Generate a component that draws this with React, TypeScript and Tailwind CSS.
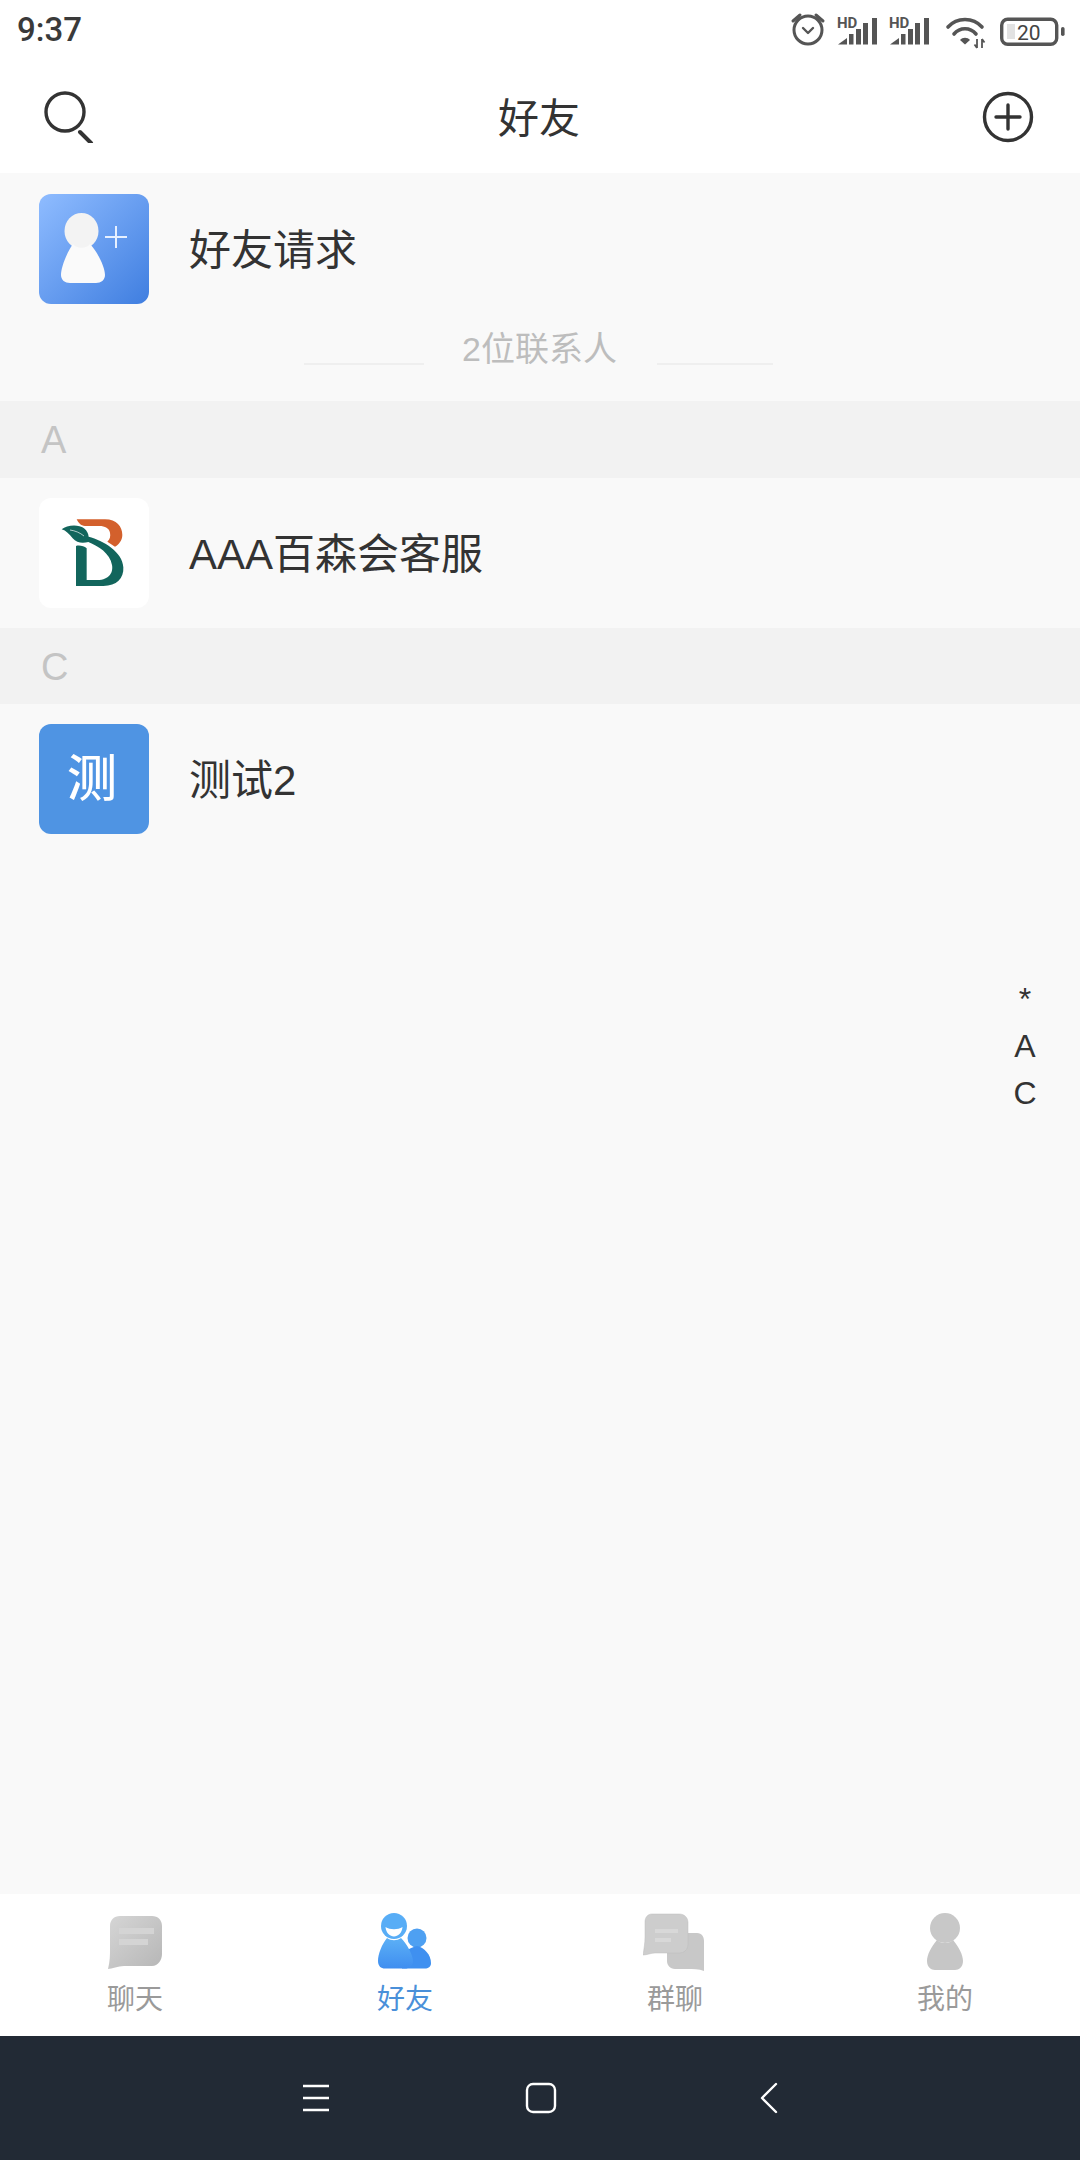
const FONT = "font-['Liberation_Sans','Noto_Sans_CJK_SC',sans-serif]";

function StatusIcons() {
  const signal = (x: number) => (
    <g fill="#555">
      <text x={x - 1} y={28} fontSize="15" fontWeight="700" fontFamily="Roboto, sans-serif" fill="#555">HD</text>
      <path d={`M${x} 44.5 L${x + 9} 38 V44.5 Z`} />
      <rect x={x + 11} y={34} width={4.5} height={10.5} />
      <rect x={x + 18} y={29} width={5} height={15.5} />
      <rect x={x + 25} y={23} width={5} height={21.5} />
      <rect x={x + 34} y={18} width={5} height={26.5} />
    </g>
  );
  return (
    <svg width="240" height="60" viewBox="830 0 240 60" className="shrink-0">
      {signal(838)}
      {signal(890)}
      <g fill="none" stroke="#555" strokeWidth="3.6" strokeLinecap="round">
        <path d="M948 27 C957 17 973 17 982 27" />
        <path d="M954 34 C960 27 970 27 976 34" />
      </g>
      <path d="M960 40 C962.5 37 967.5 37 970 40 L965 44.5 Z" fill="#555" />
      <path d="M977 39 V48 M974.5 44.5 L977 48 M982 39 V48 M982 39 L984.5 42.5" stroke="#555" strokeWidth="1.8" fill="none" />
      <rect x="1001.7" y="19.2" width="55" height="25" rx="6" fill="none" stroke="#555" strokeWidth="3.4" />
      <rect x="1007" y="24" width="8" height="15" fill="#e2e2e2" />
      <rect x="1061" y="27" width="3.6" height="9" rx="1.8" fill="#555" />
      <text x="1017" y="39.5" fontSize="21" fill="#444" fontFamily="Roboto, sans-serif">20</text>
    </svg>
  );
}

function Alarm() {
  return (
    <svg width="36" height="36" viewBox="790 14 36 36" className="shrink-0">
      <g fill="none" stroke="#555" strokeWidth="3" strokeLinecap="round" strokeLinejoin="round">
        <circle cx="808" cy="32" r="14" />
        <path d="M793 23 L800 17 M816 17 L823 23" />
        <path d="M803 30 L808 35 L813 30" strokeWidth="2.4" />
      </g>
    </svg>
  );
}

function BLogo() {
  return (
    <svg width="110" height="110" viewBox="-63 -36 330 330">
      <path
        d="M50 28 H135 C170 28 187 50 187 75 C187 92 175 105 165 110 L142 95 C150 88 152 78 150 68 C148 55 135 48 118 48 H75 C62 48 55 38 50 28Z"
        fill="#d3602c"
      />
      <path
        d="M5 58 C20 45 55 42 72 55 C82 63 85 72 86 80 C130 92 188 125 190 172 C192 205 170 228 130 228 H48 V108 C58 105 72 108 80 115 V210 H112 C150 210 160 185 156 165 C150 130 115 108 85 96 C70 100 50 100 38 85 C28 72 18 62 5 58Z"
        fill="#12655c"
      />
      <path d="M30 60 C45 62 60 68 72 78" stroke="#fff" strokeWidth="2" fill="none" />
    </svg>
  );
}

function RequestAvatar() {
  return (
    <div className="w-[110px] h-[110px] shrink-0 rounded-xl bg-gradient-to-br from-[#8fbcff] to-[#3f7ee0]">
      <svg width="110" height="110" viewBox="0 0 110 110">
        <ellipse cx="42.5" cy="37" rx="17" ry="18" fill="#f3f3f3" />
        <path d="M34 50 C37 55 48 55 51 50 C60 60 66 74 66 81 C66 86 62 89 57 89 H31 C26 89 22 86 22 81 C22 74 27 60 34 50Z" fill="#fafafa" />
        <path d="M77 32 V54 M66 43 H88" stroke="#e6f0ff" strokeWidth="2" />
      </svg>
    </div>
  );
}

function Section({ letter, className }: { letter: string; className: string }) {
  return (
    <div className={`flex items-center pl-[41px] pt-[2px] bg-[#f2f2f2] text-[38px] text-[#c4c4c4] ${className}`}>{letter}</div>
  );
}

function ChatIcon() {
  return (
    <svg width="58" height="58" viewBox="0 0 58 58">
      <defs>
        <linearGradient id="g1" x1="0" y1="0" x2="1" y2="1">
          <stop offset="0" stopColor="#d6d6d6" />
          <stop offset="1" stopColor="#b6b6b6" />
        </linearGradient>
      </defs>
      <path d="M14 3 H46 C52 3 56 7 56 13 V41 C56 47 52 53 46 53 H18 C12 53 6 56 2 56 C4 48 4 42 4 36 V13 C4 7 8 3 14 3Z" fill="url(#g1)" />
      <path d="M13 18 H48 M13 29 H42" stroke="#d4d4d4" strokeWidth="6" />
    </svg>
  );
}

function FriendIcon() {
  return (
    <svg width="58" height="58" viewBox="0 0 58 58">
      <defs>
        <linearGradient id="g2" x1="0" y1="0" x2="0" y2="1">
          <stop offset="0" stopColor="#5cb0f6" />
          <stop offset="1" stopColor="#3f8ef0" />
        </linearGradient>
      </defs>
      <circle cx="41" cy="25" r="9.5" fill="#4ea0f2" />
      <path d="M41 33 C48 34 55 42 55 50 C55 54 52 55.5 49 55.5 H26 V42 C30 37 36 34 41 33Z" fill="#3f90f0" />
      <circle cx="18" cy="13" r="13" fill="#58adf6" />
      <path d="M9.5 14 C14 17 22 17 26.5 14 C26 20 22 23.5 18 23.5 C14 23.5 10 20 9.5 14Z" fill="#fff" />
      <path d="M11 25 C15 28 21 28 25 25 C31 31 37 42 37 48 C37 53 33 55.5 29 55.5 H9 C5 55.5 2 53 2 48 C2 41 6 31 11 25Z" fill="url(#g2)" />
    </svg>
  );
}

function GroupIcon() {
  return (
    <svg width="64" height="58" viewBox="0 0 64 58">
      <path d="M30 20 H54 C59 20 61 24 61 28 V58 C56 56 50 56 44 56 H32 C27 56 24 52 24 48 V26Z" fill="#c8c8c8" />
      <path d="M9 1 H36 C42 1 45 5 45 10 V31 C45 37 41 40 36 40 H12 C8 40 4 42 0 42 C1 36 2 30 2 24 V9 C2 4 5 1 9 1Z" fill="#cdcdcd" stroke="#bdbdbd" strokeWidth="0.5" />
      <path d="M12 18 H35 M12 27 H28" stroke="#d8d8d8" strokeWidth="4" />
    </svg>
  );
}

function MeIcon() {
  return (
    <svg width="38" height="58" viewBox="0 0 38 58">
      <circle cx="19" cy="15" r="15" fill="#c8c8c8" />
      <path d="M11 27 C15 31 23 31 27 27 C33 34 37 42 37 48 C37 54 33 57 29 57 H9 C5 57 1 54 1 48 C1 42 5 34 11 27Z" fill="#c6c6c6" />
    </svg>
  );
}

function Tab({ label, active, children }: { label: string; active?: boolean; children: React.ReactNode }) {
  return (
    <div className="flex-1 flex flex-col items-center">
      <div className="h-[58px] flex items-center justify-center">{children}</div>
      <div className={`mt-[9px] text-[28px] leading-[40px] ${active ? "text-[#4a90d9]" : "text-[#9a9a9a]"}`}>{label}</div>
    </div>
  );
}

export default function App() {
  return (
    <div className={`relative w-[1080px] h-[2160px] flex flex-col bg-[#f9f9f9] text-[#333] ${FONT}`}>
      <header className="h-[173px] shrink-0 bg-white">
        <div className="h-[60px] flex items-center pl-[17px]">
          <span className="font-['Roboto'] text-[33px] font-medium text-[#3a3a3a]">9:37</span>
          <div className="ml-auto mr-[10px] flex items-center gap-[4px]">
            <Alarm />
            <StatusIcons />
          </div>
        </div>
        <div className="h-[113px] flex items-center justify-between pl-[44px] pr-[46px]">
          <svg width="52" height="52" viewBox="41 90 52 52">
            <circle cx="62" cy="111" r="19" fill="none" stroke="#333" strokeWidth="3.4" />
            <path d="M77 131 L88 142" stroke="#333" strokeWidth="4" strokeLinecap="round" />
          </svg>
          <span className="text-[41px] text-[#333] pt-[6px]">好友</span>
          <svg width="52" height="52" viewBox="0 0 52 52">
            <circle cx="26" cy="26" r="23.5" fill="none" stroke="#333" strokeWidth="3.4" />
            <path d="M26 14 V38 M14 26 H38" stroke="#333" strokeWidth="3.4" strokeLinecap="round" />
          </svg>
        </div>
      </header>

      <main className="flex-1">
        <div className="flex items-center gap-[40px] pl-[39px] pt-[21px]">
          <RequestAvatar />
          <span className="text-[42px] pt-[2px]">好友请求</span>
        </div>
        <div className="h-[97px] pl-[304px] flex items-center">
          <div className="w-[120px] h-[2px] bg-[#efefef] mt-[22px] shrink-0" />
          <span className="ml-[38px] mr-[40px] mb-[7px] text-[34px] text-[#bdbdbd]">2位联系人</span>
          <div className="w-[116px] h-[2px] bg-[#efefef] mt-[22px] shrink-0" />
        </div>

        <Section letter="A" className="h-[77px]" />
        <div className="h-[150px] flex items-center gap-[40px] pl-[39px]">
          <div className="w-[110px] h-[110px] shrink-0 rounded-xl bg-white">
            <BLogo />
          </div>
          <span className="text-[42px] pt-[2px]">AAA百森会客服</span>
        </div>

        <Section letter="C" className="h-[76px]" />
        <div className="h-[150px] flex items-center gap-[40px] pl-[39px]">
          <div className="w-[110px] h-[110px] shrink-0 rounded-xl bg-[#4f94e3] flex items-center justify-center pr-[4px] text-[50px] font-medium text-white">
            测
          </div>
          <span className="text-[42px] pt-[2px]">测试2</span>
        </div>
      </main>

      <div className="absolute right-[40px] top-[976px] w-[30px] flex flex-col items-center text-[32px] leading-[47px] text-[#333]">
        <span>*</span>
        <span>A</span>
        <span>C</span>
      </div>

      <nav className="h-[142px] shrink-0 bg-white flex pt-[19px]">
        <Tab label="聊天"><ChatIcon /></Tab>
        <Tab label="好友" active><FriendIcon /></Tab>
        <Tab label="群聊"><GroupIcon /></Tab>
        <Tab label="我的"><MeIcon /></Tab>
      </nav>

      <footer className="h-[124px] shrink-0 bg-[#222a35] flex items-center pl-[301px] gap-[194px]">
        <svg width="30" height="30" viewBox="0 0 30 30">
          <path d="M2 3 H28 M2 15 H28 M2 27 H28" stroke="#fff" strokeWidth="2.4" />
        </svg>
        <svg width="32" height="32" viewBox="0 0 32 32">
          <rect x="2" y="2" width="28" height="28" rx="6" fill="none" stroke="#fff" strokeWidth="2.4" />
        </svg>
        <svg width="20" height="32" viewBox="0 0 20 32" className="ml-[8px]">
          <path d="M17 2 L3 16 L17 30" fill="none" stroke="#fff" strokeWidth="2.4" strokeLinecap="round" strokeLinejoin="round" />
        </svg>
      </footer>
    </div>
  );
}
